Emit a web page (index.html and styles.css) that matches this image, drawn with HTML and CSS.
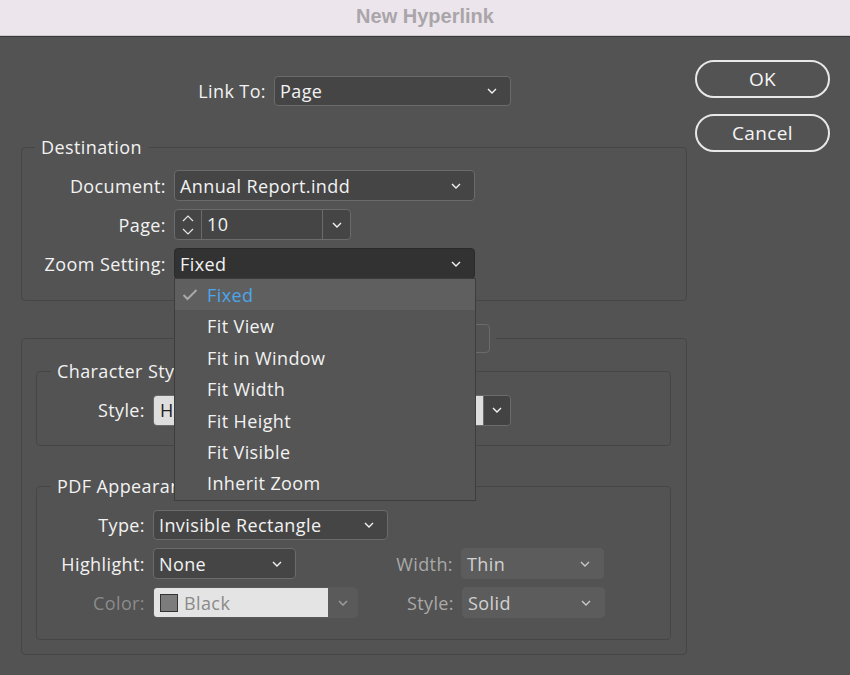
FILE: index.html
```html
<!DOCTYPE html>
<html lang="en">

<head>
  <meta charset="UTF-8" />
  <title>New Hyperlink</title>
  <link rel="stylesheet" href="styles.css">
</head>

<body>

  <!-- TITLE BAR -->
  <div class="titlebar">New Hyperlink</div>

  <div class="dialog">
    <div class="main">

      <div class="row link-row">
        <span class="label">Link To:</span>
        <div class="select w-link">
          <span>Page</span>
          <svg class="chev" width="10" height="6" viewBox="0 0 10 6"><path d="M1 1L5 5L9 1" /></svg>
        </div>
      </div>

      <!-- Destination -->
      <fieldset class="group dest">
        <legend>Destination</legend>
        <div class="row">
          <span class="label">Document:</span>
          <div class="select w-doc">
            <span>Annual Report.indd</span>
            <svg class="chev" width="10" height="6" viewBox="0 0 10 6"><path d="M1 1L5 5L9 1" /></svg>
          </div>
        </div>
        <div class="row">
          <span class="label">Page:</span>
          <div class="stepper">
            <div class="spin">
              <svg width="12" height="20" viewBox="0 0 12 20"><path d="M1 6L6 1L11 6M1 14L6 19L11 14" /></svg>
            </div>
            <div class="num">10</div>
            <div class="spin-drop">
              <svg class="chev" width="10" height="6" viewBox="0 0 10 6"><path d="M1 1L5 5L9 1" /></svg>
            </div>
          </div>
        </div>
        <div class="row zoom-row">
          <span class="label">Zoom Setting:</span>
          <div class="select open w-doc">
            <span>Fixed</span>
            <svg class="chev" width="10" height="6" viewBox="0 0 10 6"><path d="M1 1L5 5L9 1" /></svg>
            <ul class="menu">
              <li class="active">
                <svg class="check" width="16" height="12" viewBox="0 0 16 12"><path d="M1.5 6L5.5 10L14.5 1" /></svg>
                Fixed
              </li>
              <li>Fit View</li>
              <li>Fit in Window</li>
              <li>Fit Width</li>
              <li>Fit Height</li>
              <li>Fit Visible</li>
              <li>Inherit Zoom</li>
            </ul>
          </div>
        </div>
      </fieldset>

      <!-- Appearance -->
      <fieldset class="group outer">
        <legend class="box-legend"><div class="legend-box"></div></legend>

        <fieldset class="group inner char">
          <legend>Character Style</legend>
          <div class="row">
            <span class="label w-inner">Style:</span>
            <div class="style-field">
              <div class="light">H</div>
              <div class="drop">
                <svg class="chev" width="10" height="6" viewBox="0 0 10 6"><path d="M1 1L5 5L9 1" /></svg>
              </div>
            </div>
          </div>
        </fieldset>

        <fieldset class="group inner pdf">
          <legend>PDF Appearance</legend>
          <div class="row">
            <span class="label w-inner">Type:</span>
            <div class="select w-type">
              <span>Invisible Rectangle</span>
              <svg class="chev" width="10" height="6" viewBox="0 0 10 6"><path d="M1 1L5 5L9 1" /></svg>
            </div>
          </div>
          <div class="row">
            <span class="label w-inner">Highlight:</span>
            <div class="select w-small">
              <span>None</span>
              <svg class="chev" width="10" height="6" viewBox="0 0 10 6"><path d="M1 1L5 5L9 1" /></svg>
            </div>
            <span class="label dim w-width">Width:</span>
            <div class="select disabled w-small">
              <span>Thin</span>
              <svg class="chev" width="10" height="6" viewBox="0 0 10 6"><path d="M1 1L5 5L9 1" /></svg>
            </div>
          </div>
          <div class="row">
            <span class="label dimmer w-inner">Color:</span>
            <div class="color-field">
              <div class="light">
                <span class="swatch"></span>
                <span>Black</span>
              </div>
              <div class="drop">
                <svg class="chev" width="10" height="6" viewBox="0 0 10 6"><path d="M1 1L5 5L9 1" /></svg>
              </div>
            </div>
            <span class="label dim w-style">Style:</span>
            <div class="select disabled w-small">
              <span>Solid</span>
              <svg class="chev" width="10" height="6" viewBox="0 0 10 6"><path d="M1 1L5 5L9 1" /></svg>
            </div>
          </div>
        </fieldset>
      </fieldset>

    </div>

    <!-- Buttons -->
    <div class="buttons">
      <button class="btn">OK</button>
      <button class="btn">Cancel</button>
    </div>
  </div>

</body>

</html>
```

FILE: styles.css
```css
/* Base */
* {
  margin: 0;
  padding: 0;
  box-sizing: border-box;
}

html,
body {
  width: 850px;
  height: 675px;
  overflow: hidden;
  background: #535353;
  font-family: 'Open Sans', 'Liberation Sans', sans-serif;
  font-size: 18px;
  letter-spacing: 0.4px;
  color: #f2f2f2;
}

/* Title bar */
.titlebar {
  height: 36px;
  background: #ece5eb;
  border-bottom: 1px solid #cfc9cf;
  text-align: center;
  font-family: 'Liberation Sans', sans-serif;
  font-weight: 700;
  font-size: 20px;
  letter-spacing: 0;
  line-height: 32px;
  color: #aaa5aa;
}

.dialog {
  display: flex;
  border-top: 1px solid #3a3a3a;
  padding-left: 21px;
}

.main {
  width: 666px;
  padding-top: 38px;
}

/* Rows and labels */
.row {
  display: flex;
  align-items: center;
  height: 31px;
  margin-bottom: 8px;
}

.label {
  width: 152px;
  padding-right: 8px;
  text-align: right;
  white-space: nowrap;
}

.link-row .label {
  width: 253px;
}

.w-inner {
  width: 116px;
}

.w-width {
  width: 165px;
}

.w-style {
  width: 104px;
}

.dim {
  color: #a9a9a9;
}

.dimmer {
  color: #8b8b8b;
}

/* Select boxes */
.select {
  position: relative;
  display: flex;
  align-items: center;
  justify-content: space-between;
  height: 31px;
  padding: 0 13px 0 5px;
  background: #454545;
  border: 1px solid #6b6b6b;
  border-radius: 4px;
}

.chev {
  fill: none;
  stroke: #f2f2f2;
  stroke-width: 1.4;
}

.select.open {
  background: #323232;
  border-color: #2a2a2a;
}

.select.disabled {
  background: #5c5c5c;
  border-color: #5c5c5c;
  color: #d2d2d2;
}

.select.disabled .chev {
  stroke: #c8c8c8;
}

.w-link {
  width: 237px;
  height: 30px;
}

.w-doc {
  width: 301px;
}

.w-type {
  width: 235px;
  height: 30px;
}

.w-small {
  width: 143px;
}

/* Page stepper */
.stepper {
  display: flex;
  height: 31px;
  width: 177px;
  background: #454545;
  border: 1px solid #6b6b6b;
  border-radius: 4px;
}

.spin {
  width: 27px;
  display: flex;
  align-items: center;
  justify-content: center;
  border-right: 1px solid #6b6b6b;
}

.spin svg {
  fill: none;
  stroke: #e6e6e6;
  stroke-width: 1.2;
}

.num {
  flex: 1;
  padding-left: 5px;
  line-height: 29px;
  border-right: 1px solid #6b6b6b;
}

.spin-drop {
  width: 27px;
  display: flex;
  align-items: center;
  justify-content: center;
}

/* Dropdown menu */
.menu {
  position: absolute;
  z-index: 10;
  top: 29px;
  left: -1px;
  width: 302px;
  list-style: none;
  background: #555555;
  border: 1px solid #3d3d3d;
  padding-bottom: 1px;
}

.menu li {
  position: relative;
  height: 31.4px;
  line-height: 32px;
  padding-left: 32px;
  color: #f2f2f2;
}

.menu li.active {
  background: #5f5f5f;
  color: #4ba6ec;
}

.check {
  position: absolute;
  left: 7px;
  top: 10px;
  fill: none;
  stroke: #a9a9a9;
  stroke-width: 2;
}

/* Fieldsets */
.group {
  border: 1px solid #464646;
  border-radius: 4px;
  min-width: 0;
}

.group legend {
  margin-left: 13px;
  padding: 0 6px;
  line-height: 22px;
}

.dest {
  margin-top: 30px;
  padding: 12px 0 13px;
}

.outer {
  margin-top: 23px;
  padding: 7px 15px 14px 14px;
}

.outer .box-legend {
  margin-left: 164px;
  padding: 0 6px 0 0;
}

.legend-box {
  width: 290px;
  height: 29px;
  border: 1px solid #6b6b6b;
  border-radius: 4px;
}

.inner legend {
  margin-left: 14px;
}

.char {
  padding: 13px 0 12px;
}

.char .row {
  height: 30px;
}

.pdf {
  margin-top: 29px;
  padding: 12px 0 13px;
}

/* Style field */
.style-field,
.color-field {
  display: flex;
  height: 31px;
  border: 1px solid #6b6b6b;
  border-radius: 4px;
  overflow: hidden;
}

.style-field .light {
  width: 329px;
  background: #dedede;
  color: #222;
  padding-left: 6px;
  line-height: 29px;
}

.style-field .drop,
.color-field .drop {
  width: 27px;
  display: flex;
  align-items: center;
  justify-content: center;
  background: #434343;
  border-left: 1px solid #6b6b6b;
}

.color-field {
  border-color: #5a5a5a;
}

.color-field .light {
  width: 174px;
  display: flex;
  align-items: center;
  gap: 6px;
  padding-left: 6px;
  background: #e4e4e4;
  color: #8a8a8a;
}

.swatch {
  width: 18px;
  height: 18px;
  background: #7c7c7c;
  border: 1px solid #333;
}

.color-field .drop {
  width: 29px;
  background: #5a5a5a;
  border-left: none;
}

.color-field .chev {
  stroke: #a0a0a0;
}

/* Buttons */
.buttons {
  display: flex;
  flex-direction: column;
  gap: 16px;
  margin-left: 8px;
  padding-top: 23px;
}

.btn {
  width: 135px;
  height: 38px;
  border: 2px solid #e8e8e8;
  border-radius: 20px;
  background: transparent;
  color: #f5f5f5;
  font-family: 'Open Sans', 'Liberation Sans', sans-serif;
  font-size: 19px;
  letter-spacing: 0.4px;
}
```
